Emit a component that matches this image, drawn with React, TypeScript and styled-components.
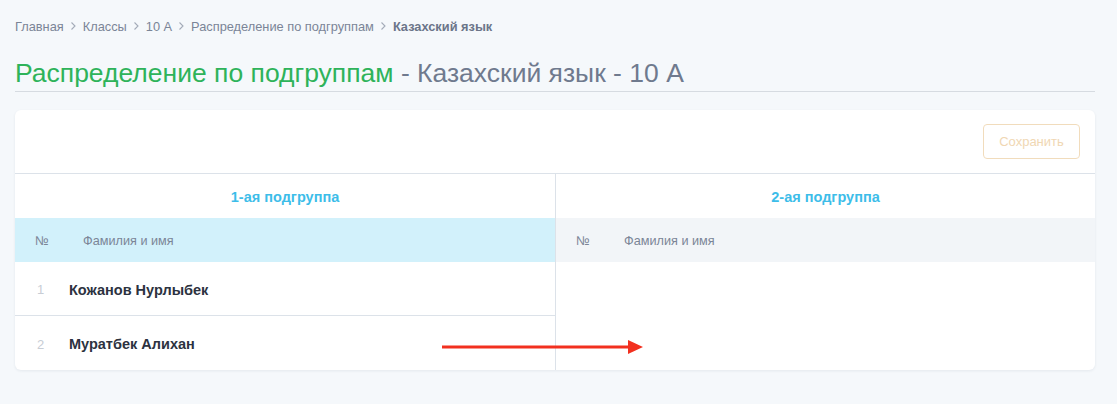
import React from "react";
import styled, { createGlobalStyle } from "styled-components";

const Global = createGlobalStyle`
  html, body { margin: 0; padding: 0; background: #f5f8fb; }
  body { font-family: "Liberation Sans", Arial, sans-serif; -webkit-font-smoothing: antialiased; }
  * { box-sizing: border-box; }
`;

const Page = styled.div`
  width: 1117px;
  height: 404px;
  padding: 16px 22px 0 15px;
  background: #f5f8fb;
`;

const Crumbs = styled.nav`
  display: flex;
  align-items: center;
  height: 20px;
  font-size: 12.8px;
  color: #7b8597;
`;

const Crumb = styled.span<{ $current?: boolean }>`
  font-weight: ${(p) => (p.$current ? 700 : 400)};
  color: ${(p) => (p.$current ? "#6b7589" : "#7b8597")};
`;

const Sep = styled.span`
  display: inline-flex;
  margin: 0 6px;
  color: #a3abb8;
`;

const Title = styled.h1`
  margin: 19px 0 0;
  height: 37px;
  line-height: 36px;
  font-size: 26.5px;
  font-weight: 400;
  color: #2eb35a;
  border-bottom: 1px solid #d6dbe1;
  white-space: nowrap;
`;

const TitleRest = styled.span`
  color: #6f7a8e;
`;

const Card = styled.section`
  position: relative;
  margin-top: 18px;
  background: #fff;
  border-radius: 6px;
  box-shadow: 0 1px 3px rgba(30, 50, 80, 0.08);
  overflow: hidden;
`;

const Toolbar = styled.div`
  display: flex;
  justify-content: flex-end;
  padding: 14px 15px;
  border-bottom: 1px solid #dce2e9;
`;

const SaveButton = styled.button`
  width: 97px;
  height: 35px;
  border: 1px solid #f1dcbc;
  border-radius: 4px;
  background: #fff;
  color: #f0d7b3;
  font-family: inherit;
  font-size: 13px;
  cursor: default;
`;

const Columns = styled.div`
  display: grid;
  grid-template-columns: 540px 1fr;
`;

const Column = styled.div<{ $divider?: boolean }>`
  border-left: ${(p) => (p.$divider ? "1px solid #dce2e9" : "none")};
`;

const GroupTitle = styled.div`
  height: 44px;
  padding-top: 2px;
  display: flex;
  align-items: center;
  justify-content: center;
  font-size: 14.5px;
  font-weight: 700;
  color: #3dbde9;
`;

const HeadRow = styled.div<{ $active?: boolean }>`
  height: 44px;
  padding-top: 2px;
  display: grid;
  grid-template-columns: 48px 1fr;
  align-items: center;
  padding-left: 20px;
  background: ${(p) => (p.$active ? "#d2f1fb" : "#f2f5f8")};
  font-size: 12.7px;
  color: #7b8597;
`;

const Row = styled.div<{ $last?: boolean }>`
  height: 54px;
  padding-top: 2px;
  display: grid;
  grid-template-columns: 32px 1fr;
  align-items: center;
  padding-left: 22px;
  border-bottom: ${(p) => (p.$last ? "none" : "1px solid #dce2e9")};
`;

const Num = styled.span`
  font-size: 13px;
  color: #c8cdd5;
`;

const Name = styled.span`
  font-size: 14.5px;
  font-weight: 700;
  color: #2c3240;
`;

const Arrow = styled.svg`
  position: absolute;
  left: 412px;
  top: 230px;
`;

const Chevron = () => (
  <svg width="7" height="10" viewBox="0 0 7 10">
    <path d="M1.5 1.5 L5 5 L1.5 8.5" fill="none" stroke="currentColor" strokeWidth="1.1" />
  </svg>
);

const crumbs = ["Главная", "Классы", "10 А", "Распределение по подгруппам"];
const students = ["Кожанов Нурлыбек", "Муратбек Алихан"];

export default function App() {
  return (
    <>
      <Global />
      <Page>
        <Crumbs>
          {crumbs.map((c) => (
            <React.Fragment key={c}>
              <Crumb>{c}</Crumb>
              <Sep>
                <Chevron />
              </Sep>
            </React.Fragment>
          ))}
          <Crumb $current>Казахский язык</Crumb>
        </Crumbs>
        <Title>
          Распределение по подгруппам <TitleRest>- Казахский язык - 10 А</TitleRest>
        </Title>
        <Card>
          <Toolbar>
            <SaveButton disabled>Сохранить</SaveButton>
          </Toolbar>
          <Columns>
            <Column>
              <GroupTitle>1-ая подгруппа</GroupTitle>
              <HeadRow $active>
                <span>№</span>
                <span>Фамилия и имя</span>
              </HeadRow>
              {students.map((s, i) => (
                <Row key={s} $last={i === students.length - 1}>
                  <Num>{i + 1}</Num>
                  <Name>{s}</Name>
                </Row>
              ))}
            </Column>
            <Column $divider>
              <GroupTitle>2-ая подгруппа</GroupTitle>
              <HeadRow>
                <span>№</span>
                <span>Фамилия и имя</span>
              </HeadRow>
            </Column>
          </Columns>
          <Arrow width="220" height="20" viewBox="0 0 220 20">
            <line x1="15" y1="7" x2="203" y2="7" stroke="#f2301f" strokeWidth="3" />
            <polygon points="201,0 216,7 201,14" fill="#f2301f" />
          </Arrow>
        </Card>
      </Page>
    </>
  );
}
